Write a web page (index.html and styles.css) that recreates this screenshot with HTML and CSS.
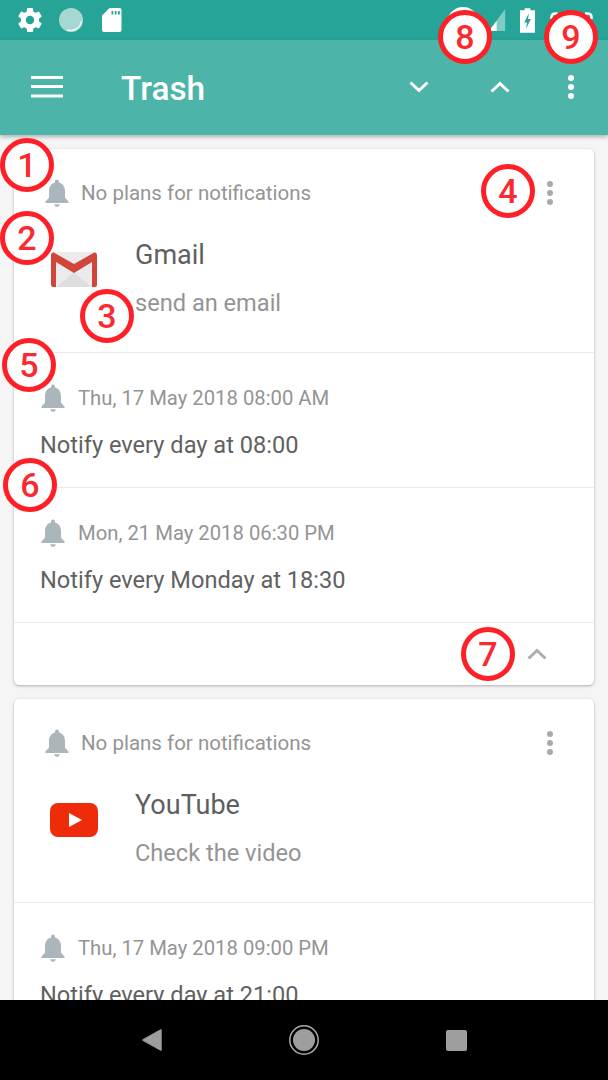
FILE: index.html
```html
<!DOCTYPE html>
<html lang="en">
<head>
<meta charset="utf-8">
<title>Trash</title>
<link rel="stylesheet" href="styles.css">
</head>
<body>
<svg class="defs" width="0" height="0" aria-hidden="true">
  <symbol id="bell" viewBox="1 1 22 26.200"><path d="M12 1.500c-1.100 0-1.800.8-1.800 1.900v.8C6.300 5.100 4.500 8.500 4.500 12.500v6L1.200 22v1.400h21.600V22l-3.300-3.500v-6c0-4-1.800-7.400-5.700-8.300v-.8c0-1.100-.7-1.900-1.800-1.900z"/><path d="M9.500 24.600h5c0 1.400-1.100 2.400-2.500 2.400s-2.500-1-2.500-2.400z"/></symbol>
  <symbol id="dots" viewBox="0 0 8 26"><circle cx="4" cy="4" r="3"/><circle cx="4" cy="13" r="3"/><circle cx="4" cy="22" r="3"/></symbol>
</svg>
<div class="app">
  <header class="status">
    <div class="status-left">
      <svg class="st-gear" viewBox="2 2 20 20"><path fill="#fff" d="M19.430 12.980c.04-.32.07-.64.07-.98s-.03-.66-.07-.98l2.110-1.650c.19-.15.24-.42.12-.64l-2-3.460c-.12-.22-.39-.3-.61-.22l-2.490 1c-.52-.4-1.080-.73-1.690-.98l-.38-2.650A.488.488 0 0 0 14 2h-4c-.25 0-.46.18-.49.420l-.38 2.650c-.61.250-1.170.590-1.690.980l-2.490-1c-.23-.09-.49 0-.61.220l-2 3.460c-.13.220-.07.490.12.640l2.110 1.650c-.04.320-.07.650-.07.980s.03.660.07.980l-2.110 1.650c-.19.150-.24.420-.12.640l2 3.460c.12.220.39.300.61.220l2.490-1c.52.400 1.080.730 1.690.980l.38 2.650c.03.240.24.420.49.420h4c.25 0 .46-.18.49-.42l.38-2.650c.61-.25 1.170-.59 1.690-.98l2.490 1c.23.090.49 0 .61-.22l2-3.460c.12-.22.07-.49-.12-.64l-2.110-1.650zM12 15.500a3.500 3.500 0 1 1 0-7 3.500 3.500 0 0 1 0 7z"/></svg>
      <svg class="st-ring" viewBox="0 0 24 24"><circle cx="12" cy="12" r="12" fill="#a6d8d1"/><path d="M22.500 13A10.500 10.500 0 0 1 8 21.700" fill="none" stroke="#e8f6f4" stroke-width="1.500"/></svg>
      <svg class="st-sd" viewBox="0 0 20 24"><path fill="#fff" fill-rule="evenodd" d="M7.500 0H17.500A2 2 0 0 1 19.500 2V22A2 2 0 0 1 17.500 24H2A2 2 0 0 1 0 22V7.500zM9.500 3v3.500h1.800V3zM12.800 3v3.500h1.800V3zM16 3v3.500h1.800V3z"/></svg>
    </div>
    <div class="status-right">
      <svg class="st-wifi" viewBox="0 0 32 12"><path fill="#fff" d="M0 12C4 3 10 0 16 0s12 3 16 12z"/></svg>
      <svg class="st-signal" viewBox="0 0 20 26"><path fill="#80cbc4" d="M19 0v26H0z"/><path fill="#fff" d="M9 14v12H0z"/></svg>
      <svg class="st-battery" viewBox="0 0 16 26"><path fill="#fff" d="M5 0h6v2h5v24H0V2h5z"/><path fill="#26a69a" d="M9.500 5 4.500 15h3l-1 7 5-10.500h-3z"/></svg>
      <svg class="st-clock" viewBox="0 0 43 12"><path fill="none" stroke="#fff" stroke-width="2.500" d="M1.500 7V5c0-2 1-3.500 4-3.500h2M35 1.500h2.500c3 0 4 1.500 4 3.500v2"/></svg>
    </div>
  </header>
  <nav class="toolbar">
    <svg class="tb-menu" viewBox="0 0 32 22"><path fill="#fff" d="M0 0h32v3H0zM0 9h32v3H0zM0 18.500h32v3H0z"/></svg>
    <h1 class="tb-title">Trash</h1>
    <svg class="tb-down" viewBox="0 0 20 12"><path fill="none" stroke="#fff" stroke-width="3" d="M1.500 1.500 10 9.500l8.500-8"/></svg>
    <svg class="tb-up" viewBox="0 0 20 12"><path fill="none" stroke="#fff" stroke-width="3" d="M1.500 10.500 10 2.500l8.500 8"/></svg>
    <svg class="tb-more"><use href="#dots" fill="#fff"/></svg>
  </nav>
  <main class="list">
    <section class="card">
      <div class="card-head">
        <div class="meta meta-head">
          <svg class="bell"><use href="#bell"/></svg>
          <span class="meta-text">No plans for notifications</span>
          <svg class="more"><use href="#dots"/></svg>
        </div>
        <div class="app-row">
          <svg class="logo logo-gmail" viewBox="0 0 46 35">
            <path fill="#ebebeb" d="M2 0h42v35H2z"/>
            <path fill="#dedede" d="M6 35 23 20l17 15z"/>
            <path fill="#d1463a" d="M0 3C0 1 2 0 3.500 1L23 12 42.500 1C44 0 46 1 46 3v30c0 1-1 2-2 2h-3V10L23 21 5 10v25H2c-1 0-2-1-2-2z"/>
          </svg>
          <div class="app-text">
            <div class="app-name">Gmail</div>
            <div class="app-note">send an email</div>
          </div>
        </div>
      </div>
      <div class="plan">
        <div class="meta">
          <svg class="bell"><use href="#bell"/></svg>
          <span class="meta-text">Thu, 17 May 2018 08:00 AM</span>
        </div>
        <div class="plan-text">Notify every day at 08:00</div>
      </div>
      <div class="plan">
        <div class="meta">
          <svg class="bell"><use href="#bell"/></svg>
          <span class="meta-text">Mon, 21 May 2018 06:30 PM</span>
        </div>
        <div class="plan-text">Notify every Monday at 18:30</div>
      </div>
      <div class="card-foot">
        <svg class="foot-up" viewBox="0 0 20 12"><path fill="none" stroke="#adadad" stroke-width="3" d="M1.500 10.500 10 2.500l8.500 8"/></svg>
      </div>
    </section>
    <section class="card">
      <div class="card-head">
        <div class="meta meta-head">
          <svg class="bell"><use href="#bell"/></svg>
          <span class="meta-text">No plans for notifications</span>
          <svg class="more"><use href="#dots"/></svg>
        </div>
        <div class="app-row">
          <svg class="logo logo-yt" viewBox="0 0 48 34">
            <rect width="48" height="34" rx="8" fill="#ee2c0a"/>
            <path fill="#fff" d="M19 10v14l13-7z"/>
          </svg>
          <div class="app-text">
            <div class="app-name">YouTube</div>
            <div class="app-note">Check the video</div>
          </div>
        </div>
      </div>
      <div class="plan">
        <div class="meta">
          <svg class="bell"><use href="#bell"/></svg>
          <span class="meta-text">Thu, 17 May 2018 09:00 PM</span>
        </div>
        <div class="plan-text">Notify every day at 21:00</div>
      </div>
    </section>
  </main>
  <footer class="sysnav">
    <svg class="nav-back" viewBox="0 0 20 22"><path fill="#9e9e9e" stroke="#9e9e9e" stroke-width="1.500" stroke-linejoin="round" d="M19 1v20L1 11z"/></svg>
    <svg class="nav-home" viewBox="0 0 30 30"><circle cx="15" cy="15" r="14.200" fill="none" stroke="#aaa" stroke-width="1.500"/><circle cx="15" cy="15" r="11" fill="#9e9e9e"/></svg>
    <span class="nav-square"></span>
  </footer>
  <span class="mark m1">1</span>
  <span class="mark m2">2</span>
  <span class="mark m3">3</span>
  <span class="mark m4">4</span>
  <span class="mark m5">5</span>
  <span class="mark m6">6</span>
  <span class="mark m7">7</span>
  <span class="mark m8">8</span>
  <span class="mark m9">9</span>
</div>
</body>
</html>
```
FILE: styles.css
```css
* { box-sizing: border-box; }
html, body { margin: 0; padding: 0; }
body { font-family: Roboto, "Liberation Sans", sans-serif; background: #f5f5f5; }
.defs { position: absolute; }
.app { position: relative; width: 608px; height: 1080px; display: flex; flex-direction: column; overflow: hidden; }

.status { flex: 0 0 40px; background: #26a498; display: flex; justify-content: space-between; align-items: center; }
.status-left { display: flex; align-items: center; padding-left: 18px; }
.st-gear { width: 24px; height: 24px; margin-right: 17px; }
.st-ring { width: 24px; height: 24px; margin-right: 19px; }
.st-sd { width: 20px; height: 24px; }
.status-right { display: flex; align-items: center; padding-right: 15px; }
.st-wifi { width: 32px; height: 12px; margin: 0 10px 14px 0; }
.st-signal { width: 17px; height: 24px; margin-right: 14px; }
.st-battery { width: 15px; height: 25px; margin-right: 15px; }
.st-clock { width: 43px; height: 12px; margin-bottom: 4px; }

.toolbar { flex: 0 0 95px; background: #4db4a9; display: flex; align-items: center; box-shadow: 0 2px 4px rgba(0,0,0,.28); position: relative; z-index: 1; padding-bottom: 2px; }
.tb-menu { width: 32px; height: 22px; margin-left: 31px; }
.tb-title { margin: 3px 0 0 58px; flex: 1; font-size: 33.400px; font-weight: 500; color: #fff; }
.tb-down { width: 20px; height: 12px; margin-right: 61px; }
.tb-up { width: 20px; height: 12px; margin-right: 57px; }
.tb-more { width: 8px; height: 26px; margin-right: 33px; }

.list { flex: 1; min-height: 0; overflow: hidden; padding: 14px 14px 0 14px; display: flex; flex-direction: column; gap: 14px; }
.card { flex: none; background: #fff; border-radius: 5px; box-shadow: 0 1px 3px rgba(0,0,0,.3); }
.card-head { height: 204px; padding: 29px 0 0 31px; border-bottom: 1px solid #eaeaea; }
.meta { display: flex; align-items: center; height: 30px; color: #949494; font-size: 20.250px; }
.bell { width: 24px; height: 28px; fill: #aab6bc; flex: none; }
.meta-text { margin-left: 13px; }
.meta-head .meta-text { flex: 1; margin-left: 12px; font-size: 20.500px; }
.more { width: 8px; height: 26px; fill: #a9a9a9; margin-right: 40px; }
.app-row { display: flex; margin-top: 31px; }
.logo { flex: none; }
.logo-gmail { width: 46px; height: 35px; margin: 13px 0 0 6px; }
.logo-yt { width: 48px; height: 34px; margin: 14px 0 0 5px; }
.app-text { margin-left: 38px; }
.logo-yt + .app-text { margin-left: 37px; }
.app-name { font-size: 27px; line-height: 32px; color: #5f5f5f; }
.app-note { font-size: 23.600px; line-height: 32px; color: #949494; margin-top: 16px; }
.plan { height: 135px; padding: 30px 0 0 27px; border-bottom: 1px solid #eaeaea; }
.plan-text { font-size: 23.600px; line-height: 32px; color: #616161; margin: 16px 0 0 -1px; }
.card-foot { height: 62px; display: flex; justify-content: flex-end; align-items: center; padding-right: 47px; }
.foot-up { width: 20px; height: 12px; }

.sysnav { flex: 0 0 80px; background: #000; display: flex; align-items: center; position: relative; z-index: 1; }
.nav-back { width: 20px; height: 22px; margin-left: 142px; }
.nav-home { width: 30px; height: 30px; margin-left: 127px; }
.nav-square { width: 21px; height: 21px; border-radius: 2px; background: #9e9e9e; margin-left: 127px; }

.mark { position: absolute; z-index: 2; width: 54px; height: 54px; border: 5px solid #ff1f26; border-radius: 50%; background: #fff; color: #fb2a30; font-size: 34px; font-weight: 500; line-height: 44px; text-align: center; }
.m1 { left: 0; top: 138px; }
.m2 { left: 0; top: 211px; }
.m3 { left: 80px; top: 289px; }
.m4 { left: 481px; top: 164px; }
.m5 { left: 2px; top: 338px; }
.m6 { left: 3px; top: 458px; }
.m7 { left: 461px; top: 627px; }
.m8 { left: 438px; top: 10px; }
.m9 { left: 544px; top: 10px; }
```
